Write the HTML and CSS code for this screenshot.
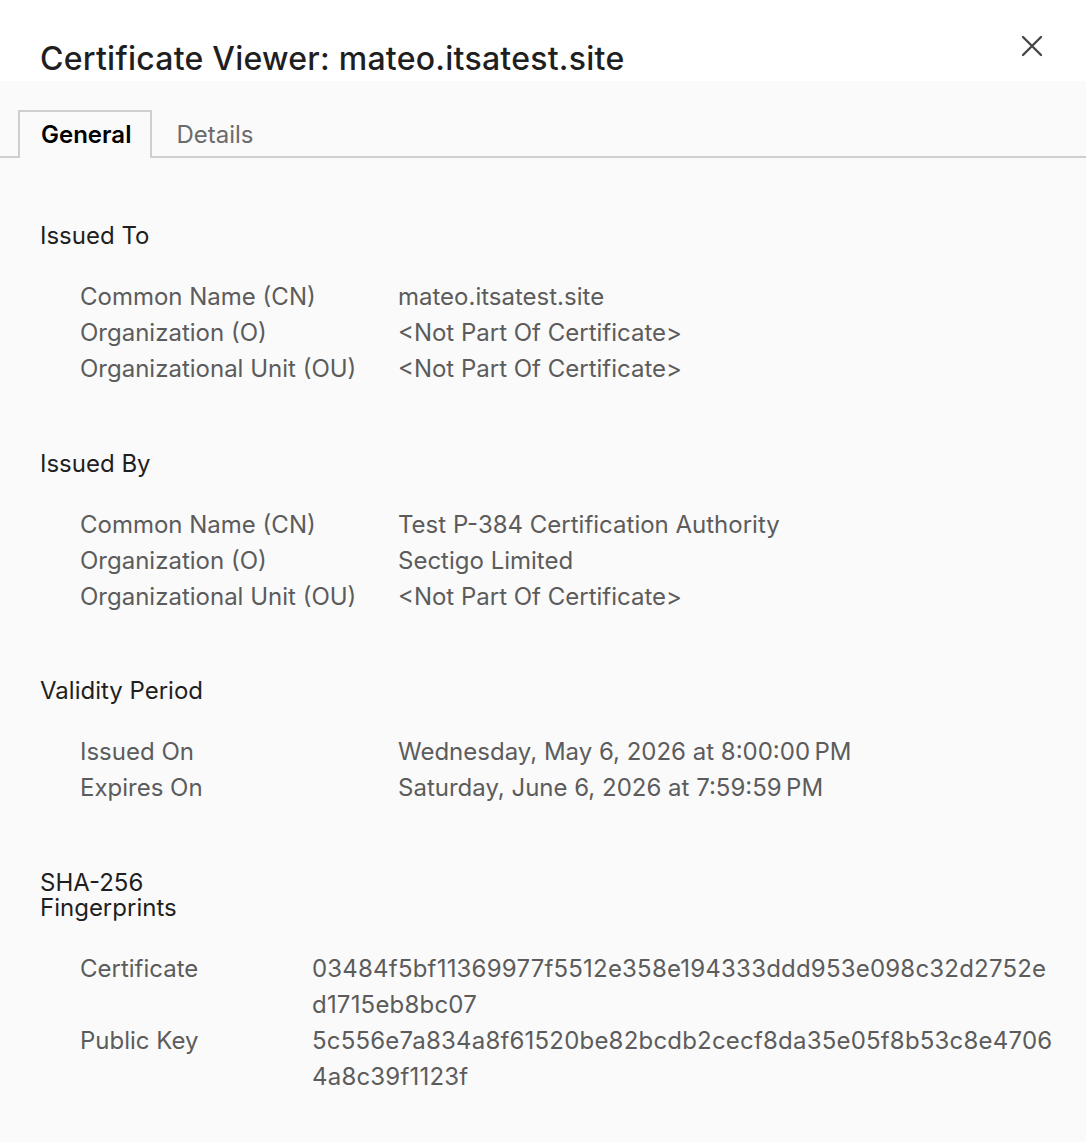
FILE: index.html
```html
<!DOCTYPE html>
<html lang="en">
<head>
<meta charset="UTF-8" />
<meta name="viewport" content="width=device-width, initial-scale=1.0" />
<title>Certificate Viewer: mateo.itsatest.site</title>
<link rel="stylesheet" href="styles.css">
</head>
<body>
<div class="dialog">
  <div class="titlebar">
    <h1>Certificate Viewer: mateo.itsatest.site</h1>
    <button class="close" aria-label="Close">
      <svg width="22" height="22" viewBox="0 0 22 22" fill="none" stroke="currentColor" stroke-width="2.4" stroke-linecap="round"><path d="M2 2l18 18M20 2L2 20"/></svg>
    </button>
  </div>

  <div class="tabs">
    <div class="tab active">General</div>
    <div class="tab">Details</div>
  </div>

  <div class="content">
    <div class="section">
      <div class="section-title">Issued To</div>
      <div class="fields">
        <span class="label">Common Name (CN)</span><span class="value">mateo.itsatest.site</span>
        <span class="label">Organization (O)</span><span class="value">&lt;Not Part Of Certificate&gt;</span>
        <span class="label">Organizational Unit (OU)</span><span class="value">&lt;Not Part Of Certificate&gt;</span>
      </div>
    </div>

    <div class="section">
      <div class="section-title">Issued By</div>
      <div class="fields">
        <span class="label">Common Name (CN)</span><span class="value">Test P-384 Certification Authority</span>
        <span class="label">Organization (O)</span><span class="value">Sectigo Limited</span>
        <span class="label">Organizational Unit (OU)</span><span class="value">&lt;Not Part Of Certificate&gt;</span>
      </div>
    </div>

    <div class="section">
      <div class="section-title">Validity Period</div>
      <div class="fields">
        <span class="label">Issued On</span><span class="value">Wednesday, May 6, 2026 at 8:00:00&#8239;PM</span>
        <span class="label">Expires On</span><span class="value">Saturday, June 6, 2026 at 7:59:59&#8239;PM</span>
      </div>
    </div>

    <div class="section">
      <div class="section-title">SHA-256 Fingerprints</div>
      <div class="fields hashes">
        <span class="label">Certificate</span>
        <span class="value"><span>03484f5bf11369977f5512e358e194333ddd953e098c32d2752e</span><span>d1715eb8bc07</span></span>
        <span class="label">Public Key</span>
        <span class="value"><span>5c556e7a834a8f61520be82bcdb2cecf8da35e05f8b53c8e4706</span><span>4a8c39f1123f</span></span>
      </div>
    </div>
  </div>
</div>
</body>
</html>
```

FILE: styles.css
```css
* { box-sizing: border-box; margin: 0; padding: 0; }
body { font-family: Inter, "Liberation Sans", sans-serif; background: #fafafa; color: #1f1f1f; }
.dialog { min-height: 100vh; }

.titlebar { background: #fff; height: 81px; display: flex; align-items: center; justify-content: space-between; padding: 36px 43px 0 40px; }
.titlebar h1 { font-size: 32px; font-weight: 500; color: #1f1f1f; line-height: 40px; letter-spacing: 0.25px; }
.close { background: none; border: none; color: #474747; display: flex; cursor: pointer; margin-top: -26px; }

.tabs { display: flex; padding: 29px 0 0 18px; border-bottom: 2px solid #cfcfcf; }
.tab { font-size: 24px; color: #6b6b6b; height: 46px; line-height: 46px; padding: 0 22px; margin-bottom: -2px; border: 2px solid transparent; border-bottom: none; }
.tab.active { color: #000; font-weight: 600; border-color: #cfcfcf; background: #fafafa; height: 48px; padding: 0 19px 0 21px; }

.content { padding: 65px 40px 40px; }
.section + .section { margin-top: 63.5px; }
.section-title { font-size: 24px; line-height: 25px; color: #1f1f1f; max-width: 200px; }
.fields { display: grid; grid-template-columns: 318px 1fr; padding: 31px 0 0 40px; font-size: 24px; line-height: 36px; color: #5c5c5c; }
.fields.hashes { grid-template-columns: 232px 1fr; }
.hashes .value { letter-spacing: 0.2px; }
.hashes .value span { display: block; }
```
